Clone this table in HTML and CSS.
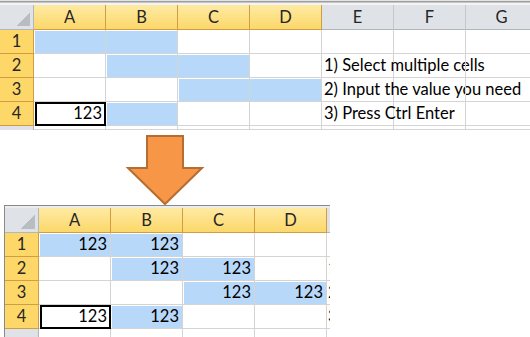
FILE: index.html
```html
<!DOCTYPE html>
<html>
<head>
<meta charset="utf-8">
<link rel="stylesheet" href="styles.css">
</head>
<body>
<div class="sheet sheet-top">
  <div class="strip"></div>
  <div class="stack">
    <div class="grid grid-top layer">
      <div class="range r-a1b1"></div>
      <div class="range r-b2c2"></div>
      <div class="range r-c3d3"></div>
      <div class="range r-b4"></div>
    </div>
    <div class="grid grid-top layer">
      <div class="corner"></div>
      <div class="ch sel">A</div><div class="ch sel">B</div><div class="ch sel">C</div><div class="ch sel">D</div>
      <div class="ch">E</div><div class="ch">F</div><div class="ch">G</div>

      <div class="rh sel">1</div>
      <div class="c"></div><div class="c"></div><div class="c"></div><div class="c"></div><div class="c"></div><div class="c"></div><div class="c"></div>
      <div class="rh sel">2</div>
      <div class="c"></div><div class="c"></div><div class="c"></div><div class="c"></div><div class="c note">1) Select multiple cells</div><div class="c"></div><div class="c"></div>
      <div class="rh sel">3</div>
      <div class="c"></div><div class="c"></div><div class="c"></div><div class="c"></div><div class="c note">2) Input the value you need</div><div class="c"></div><div class="c"></div>
      <div class="rh sel">4</div>
      <div class="c num">123</div><div class="c"></div><div class="c"></div><div class="c"></div><div class="c note">3) Press Ctrl Enter</div><div class="c"></div><div class="c"></div>
      <div class="rh part"></div>
      <div class="c"></div><div class="c"></div><div class="c"></div><div class="c"></div><div class="c"></div><div class="c"></div><div class="c"></div>
    </div>
    <div class="grid grid-top layer">
      <div class="active r-a4"></div>
    </div>
  </div>
</div>

<div class="arrow-wrap">
  <svg class="arrow" width="80" height="76" viewBox="0 0 80 76">
    <polygon points="21,6 57,6 57,38 76,38 39,74 2,38 21,38" fill="#f79646" stroke="#b66d31" stroke-width="2" stroke-linejoin="miter"/>
  </svg>
</div>

<div class="sheet sheet-bottom">
  <div class="strip2"></div>
  <div class="stack">
    <div class="grid grid-bottom layer">
      <div class="range r-a1b1"></div>
      <div class="range r-b2c2"></div>
      <div class="range r-c3d3"></div>
      <div class="range r-b4"></div>
    </div>
    <div class="grid grid-bottom layer">
      <div class="corner"></div>
      <div class="ch sel">A</div><div class="ch sel">B</div><div class="ch sel">C</div><div class="ch sel">D</div>
      <div class="ch edge"></div>

      <div class="rh sel">1</div>
      <div class="c num">123</div><div class="c num">123</div><div class="c"></div><div class="c"></div><div class="c note clip"></div>
      <div class="rh sel">2</div>
      <div class="c"></div><div class="c num">123</div><div class="c num">123</div><div class="c"></div><div class="c note clip">1) Select multiple cells</div>
      <div class="rh sel">3</div>
      <div class="c"></div><div class="c"></div><div class="c num">123</div><div class="c num">123</div><div class="c note clip">2) Input the value you need</div>
      <div class="rh sel">4</div>
      <div class="c num">123</div><div class="c num">123</div><div class="c"></div><div class="c"></div><div class="c note clip">3) Press Ctrl Enter</div>
      <div class="rh part2"></div>
      <div class="c"></div><div class="c"></div><div class="c"></div><div class="c"></div><div class="c clip"></div>
    </div>
    <div class="grid grid-bottom layer">
      <div class="active r-a4"></div>
    </div>
  </div>
</div>
</body>
</html>
```
FILE: styles.css
```css
html, body {
  margin: 0;
  padding: 0;
  background: #ffffff;
}
body {
  width: 530px;
  height: 337px;
  overflow: hidden;
  font-family: Lato, "Liberation Sans", sans-serif;
  font-size: 16.5px;
  color: #000;
}
.sheet {
  overflow: hidden;
}
.sheet-top {
  width: 530px;
}
.strip {
  height: 5px;
  background: linear-gradient(#e4e4e4 0 1px, #9d9d9d 1px 2px, #c6c6c6 2px 3px, #f3f3f3 3px 5px);
}
.stack {
  display: grid;
}
.layer {
  grid-area: 1 / 1;
}
.grid {
  display: grid;
}
.grid-top {
  grid-template-columns: 34px repeat(7, 72px);
  grid-template-rows: 25px repeat(4, 24px) 4px;
}
.corner {
  background: #dfe3e8;
  border-right: 1px solid #b2b7bd;
  border-bottom: 1px solid #b2b7bd;
  position: relative;
}
.corner::after {
  content: "";
  position: absolute;
  right: 3px;
  bottom: 3px;
  width: 14px;
  height: 14px;
  background: linear-gradient(to bottom right, transparent 50%, #b9bdc2 50%);
}
.ch, .rh {
  box-sizing: border-box;
  text-align: center;
  color: #262626;
  background: #dfe3e8;
  border-right: 1px solid #c3c8ce;
  border-bottom: 1px solid #aeb5bd;
  line-height: 24px;
}
.ch.sel {
  background: linear-gradient(#feeaa3, #fcd86a);
  border-right-color: #d29c45;
  border-bottom-color: #d29c45;
}
.rh.sel {
  background: #fdd868;
  border-right-color: #d29c45;
  border-bottom-color: #d29c45;
  line-height: 23px;
}
.rh.part, .rh.part2 {
  border-bottom: none;
  border-right-color: #aeb5bd;
}
.c {
  box-sizing: border-box;
  border-right: 1px solid #d4d4d4;
  border-bottom: 1px solid #d4d4d4;
  line-height: 23px;
  padding: 0 3px;
  white-space: nowrap;
  min-width: 0;
}
.c.num {
  text-align: right;
  padding-right: 3px;
}
.c.note {
  overflow: visible;
  padding-left: 2px;
}
.range {
  background: #b8d8fa;
  margin: 1px;
}
.active {
  border: 2px solid #000;
  margin: 0 0 0 1px;
}
.r-a1b1 { grid-column: 2 / 4; grid-row: 2; }
.r-b2c2 { grid-column: 3 / 5; grid-row: 3; }
.r-c3d3 { grid-column: 4 / 6; grid-row: 4; }
.r-b4 { grid-column: 3; grid-row: 5; }
.r-a4 { grid-column: 2; grid-row: 5; }

.arrow-wrap {
  height: 75px;
  padding-left: 126px;
}
.arrow {
  display: block;
  overflow: visible;
}

.sheet-bottom {
  margin-left: 4px;
  width: 326px;
  border-left: 1px solid #8a8a8a;
  box-sizing: border-box;
  height: 132px;
}
.strip2 {
  height: 3px;
  background: linear-gradient(#8a8a8a 0 1px, #ececec 1px 3px);
}
.grid-bottom {
  grid-template-columns: 34px repeat(4, 72px) 4px;
  grid-template-rows: 25px repeat(4, 24px) 10px;
}
.ch.edge {
  border-right: none;
}
.c.clip {
  border-right: none;
  overflow: hidden;
  padding: 0 0 0 1px;
}
```
